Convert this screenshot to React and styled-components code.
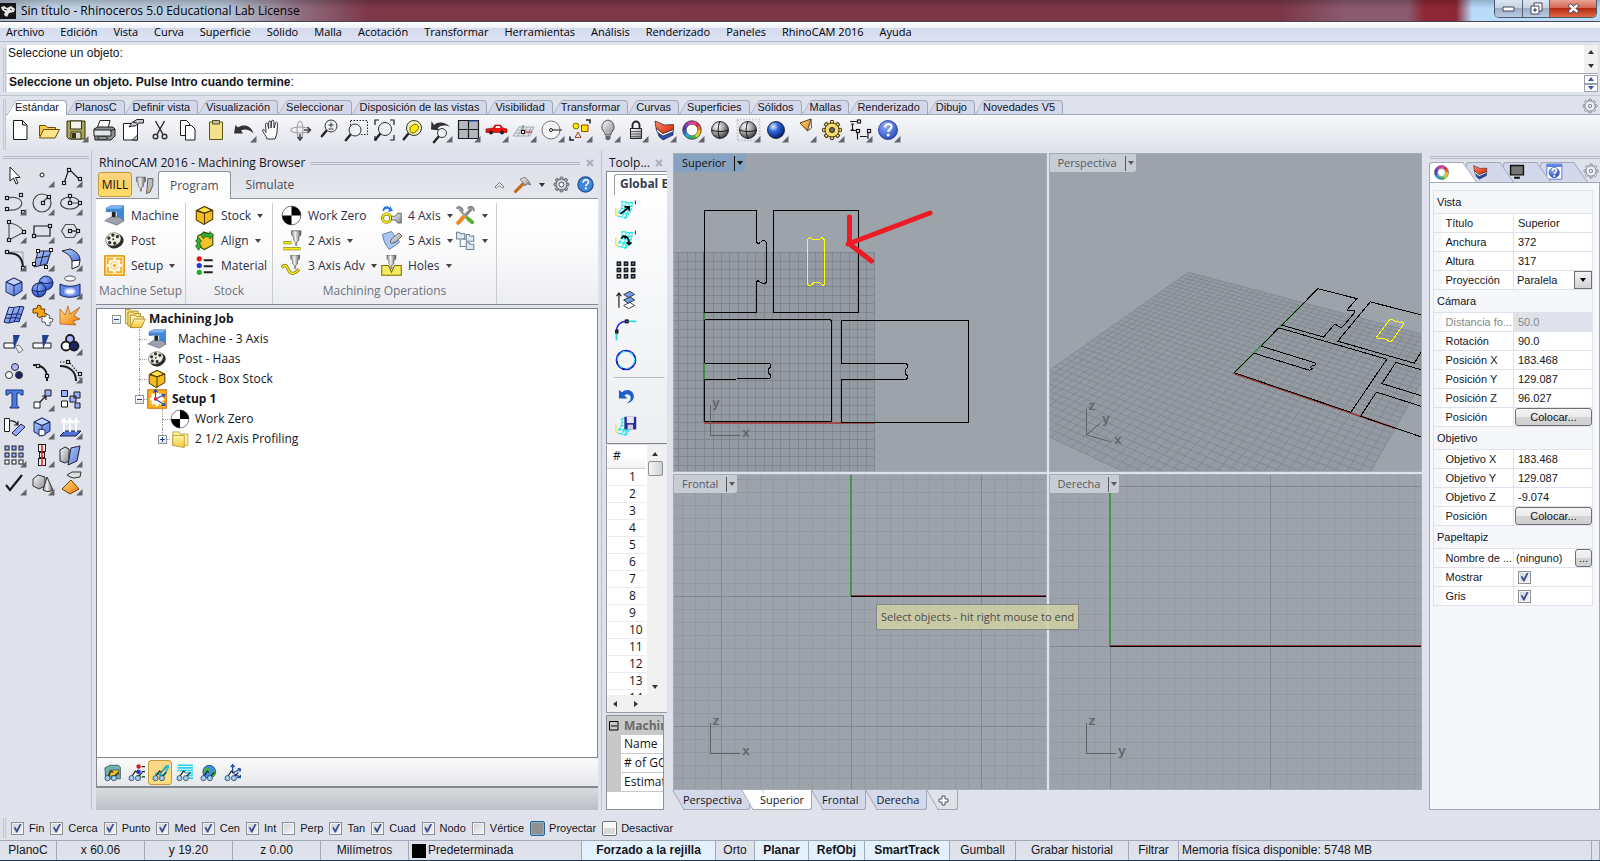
import React from "react";
import styled, { createGlobalStyle, css } from "styled-components";

const ui = '"Open Sans", "Noto Sans", sans-serif';
const sys = '"Liberation Sans", Arial, sans-serif';
const face = "#dfe2ea";
const edge = "#a0a9b8";
const tabFill = "#d3d9ea";

const Global = createGlobalStyle`
  *, *::before, *::after { box-sizing: border-box; }
  body { margin: 0; background: ${face}; color: #15151c; font: 12px/16px ${ui}; }
  button, input, select { font: inherit; color: inherit; margin: 0; }
  ul { list-style: none; margin: 0; padding: 0; }
`;

/* ---------- shared parts ---------- */

const Window = styled.div`
  min-height: 100vh;
  display: flex;
  flex-direction: column;
`;
const bare = css`
  border: 0;
  background: none;
  padding: 0;
`;
const IconButton = styled.button`
  ${bare}
  width: ${(p) => p.$size || 28}px;
  height: ${(p) => p.$size || 28}px;
  flex: none;
  display: flex;
  align-items: center;
  justify-content: center;
`;
const Art = styled.svg`
  display: block;
  flex: none;
`;
const SharedDefs = styled(Art)`
  position: absolute;
`;
const Grip = styled.div`
  flex: 1;
  height: 3px;
  border: solid #b4bac8;
  border-width: 1px 0;
`;
const SideGrip = styled.div`
  width: 3px;
  margin: 3px 0 0 3px;
  border: solid #c0c5d2;
  border-width: 0 1px;
`;

function Icon({ art, size = 28, fly, box = 28 }) {
  return (
    <Art width={size} height={size} viewBox={`0 0 ${box} ${box}`} aria-hidden="true">
      {art}
      {fly && <path d="M26.500 20v6.500H20z" fill="#62656a" />}
    </Art>
  );
}

/* ---------- icon drawings ---------- */

const Defs = () => (
  <SharedDefs width="0" height="0" aria-hidden="true">
    <defs>
      <linearGradient id="gb" x1="0" y1="0" x2="1" y2="1"><stop offset="0" stopColor="#b9ccff" /><stop offset="1" stopColor="#4f74d8" /></linearGradient>
      <linearGradient id="gg" x1="0" y1="0" x2="1" y2="1"><stop offset="0" stopColor="#fdfdfd" /><stop offset="1" stopColor="#85888d" /></linearGradient>
      <linearGradient id="gm" x1="0" y1="0" x2="1" y2="0"><stop offset="0" stopColor="#8b8b8b" /><stop offset=".4" stopColor="#f2f2f2" /><stop offset="1" stopColor="#5a5a5a" /></linearGradient>
      <linearGradient id="gy" x1="0" y1="0" x2="0" y2="1"><stop offset="0" stopColor="#fff6a8" /><stop offset="1" stopColor="#f2c53c" /></linearGradient>
      <linearGradient id="go" x1="0" y1="0" x2="1" y2="1"><stop offset="0" stopColor="#ffdf8e" /><stop offset="1" stopColor="#ee7a00" /></linearGradient>
      <linearGradient id="gr" x1="0" y1="0" x2="1" y2="1"><stop offset="0" stopColor="#ff8a66" /><stop offset="1" stopColor="#e02200" /></linearGradient>
      <radialGradient id="sg" cx=".35" cy=".3" r=".75"><stop offset="0" stopColor="#fff" /><stop offset=".5" stopColor="#a5a5a5" /><stop offset="1" stopColor="#333" /></radialGradient>
      <radialGradient id="sb" cx=".35" cy=".3" r=".75"><stop offset="0" stopColor="#e8f2ff" /><stop offset=".4" stopColor="#2d66d8" /><stop offset="1" stopColor="#031763" /></radialGradient>
      <radialGradient id="sh" cx=".4" cy=".3" r=".8"><stop offset="0" stopColor="#8fb2ff" /><stop offset="1" stopColor="#1d3fb4" /></radialGradient>
    </defs>
  </SharedDefs>
);

const K = "#1b1b1b";
const ln = { fill: "none", stroke: K, strokeWidth: 1.2 };
const Sq = ({ at, s = 3, f = "#fff" }) =>
  at.map(([x, y], i) => <rect key={i} x={x - s / 2} y={y - s / 2} width={s} height={s} fill={f} stroke={K} />);
const Wheel = ({ r = 8, c = 14, w = 4 }) => {
  const cols = ["#e5234b", "#f26522", "#fcc10f", "#c8dc28", "#3fb54a", "#1aa99b", "#28a8e0", "#2a62c8", "#4b38a8", "#8e3cb8", "#d13bb5", "#ee3a8a"];
  const len = 2 * Math.PI * r;
  return (
    <g>
      <circle cx={c} cy={c} r={r + w / 2} fill="#fff" />
      {cols.map((k, i) => (
        <circle key={k} cx={c} cy={c} r={r} fill="none" stroke={k} strokeWidth={w} strokeDasharray={`${len / 12 + 0.4} ${len}`} transform={`rotate(${i * 30 - 60} ${c} ${c})`} />
      ))}
      <circle cx={c} cy={c} r={r + w / 2} fill="none" stroke="#333" strokeWidth=".8" />
      <circle cx={c} cy={c} r={r - w / 2} fill="#fff" stroke="#333" strokeWidth=".6" />
    </g>
  );
};
const Lens = ({ x = 16, y = 11, r = 6, f = "#eef1f4" }) => (
  <g>
    <path d={`M${x - r * 0.7} ${y + r * 0.7}L${x - r * 0.7 - 5} ${y + r * 0.7 + 6}`} stroke="#222" strokeWidth="2.400" strokeLinecap="round" />
    <circle cx={x} cy={y} r={r} fill={f} stroke="#333" />
  </g>
);
const Layers = () => (
  <g stroke="#1c1c2c" strokeWidth=".7">
    <path d="M7 14l6 4.500 10-4V19l-10 5-4-3.500z" fill="#2b4fae" />
    <path d="M6 12l7 5.500 10.500-4v2L13 20l-6-4z" fill="#fff" />
    <path d="M5 5l9.500 4 9-.5V13L13 17.500 6 12z" fill="url(#gr)" />
  </g>
);
const Help = ({ c = 14, r = 9.5 }) => (
  <g>
    <circle cx={c} cy={c} r={r} fill="url(#sh)" stroke="#1a2f96" strokeWidth=".8" />
    <path d={`M${c - 3} ${c - 2.5}c0-4.500 6.500-4.500 6.500-.8 0 2.600-3.300 2.600-3.300 5.300`} fill="none" stroke="#fff" strokeWidth="2.200" />
    <circle cx={c + 0.2} cy={c + 5} r="1.500" fill="#fff" />
  </g>
);
const Cog = ({ c = 14, r = 7, f = "#f5dc6e", s = "#3d3410", hole = 2.6, hf = "#666", sw = 1 }) => (
  <g>
    {[0, 45, 90, 135, 180, 225, 270, 315].map((a) => (
      <rect key={a} x={c - r * 0.24} y={c - r * 1.35} width={r * 0.48} height={r * 0.6} rx=".6" fill={f} stroke={s} strokeWidth={sw} transform={`rotate(${a} ${c} ${c})`} />
    ))}
    <circle cx={c} cy={c} r={r} fill={f} stroke={s} strokeWidth={sw} />
    <circle cx={c} cy={c} r={hole} fill={hf} stroke={s} strokeWidth={sw} />
  </g>
);
const Ball = ({ g = "url(#sg)", lines = true }) => (
  <g>
    <circle cx="14" cy="14" r="8.500" fill={g} stroke="#111" strokeWidth=".8" />
    {lines && <path d="M5.500 14c5 2 12 2 17 0M14 5.500c-2.500 5-2.500 12 0 17" fill="none" stroke="#111" />}
  </g>
);
const Cube = ({ f = "url(#gb)" }) => (
  <g stroke="#1e2d66" strokeWidth="1">
    <path d="M6 9l8-4 8 4v9l-8 5-8-4z" fill={f} />
    <path d="M6 9l8-4 8 4-8 3.500z" fill="#c3d2ff" />
    <path d="M6 9l8 3.500L22 9M14 12.500V23" fill="none" />
  </g>
);

const std = [
  ["Nuevo", <path d="M7.500 4.500h9l4.500 4.500v14.500H7.500zM16.500 4.500V9H21" fill="#fff" stroke={K} />],
  ["Abrir", <g stroke="#6b4c00"><path d="M5.500 20V9.500h6l2 2h8V20z" fill="#f5c945" /><path d="M5.500 22l4-8.500h16L21 22z" fill="#ffe48a" /></g>],
  ["Guardar", <g stroke="#33310f"><path d="M5 5h18v18H7l-2-2z" fill="#a9a75c" /><path d="M8.500 5h11v8h-11z" fill="#f2f2ec" /><path d="M9 16h10v7H9z" fill="#d9d9ce" /><path d="M10.500 17.500h3V22h-3z" fill="#33310f" /></g>, 1],
  ["Imprimir", <g stroke="#222"><path d="M10 4.500h10l-2 8H7z" fill="#fff" /><path d="M4 13l4-2h15l2 2v7l-4 4H5z" fill="#8d9096" /><path d="M4 14h17v6H4z" fill="#e4e6e8" /><path d="M20 15l5-2M8 21h9v2H8z" fill="#fff" /></g>],
  ["Propiedades del documento", <g stroke="#222"><path d="M5.500 7.500h14V24h-14z" fill="#fff" /><path d="M19.500 19v5h-5z" fill="#ccc" /><path d="M11 11l3-4.500 5-3h6.500V7H21l-4 3h-3z" fill="#c9ccd2" /><path d="M15 6l4 1" /></g>],
  ["Cortar", <g {...ln} stroke="#333" strokeWidth="1.500"><path d="M9.500 5l7.500 13.500M18.500 5L11 18.500" /><circle cx="9.500" cy="20.500" r="2.300" /><circle cx="18.500" cy="20.500" r="2.300" /></g>],
  ["Copiar", <g fill="#fff" stroke={K}><path d="M6.500 4.500h6l3 3v12h-9z" /><path d="M11.500 9.500h6l3.500 3.500v11h-9.500z" /></g>],
  ["Pegar", <g stroke="#5b5310"><path d="M7.500 6h13v17.500h-13z" fill="#f3e08a" /><path d="M10.500 4.500h7v3.500h-7z" fill="#bbb" /></g>],
  ["Deshacer", <g><path d="M8 11.500c6-4 13-2 15.500 6-4-4-8.500-5-12.500-3l2 3-9 0 1.500-8.500z" fill="#333" /></g>, 1],
  ["Encuadre", <path d="M9 23c-1-4-4-6-4.500-9 1-1 2.500 0 3.500 2.500L7.500 8c.7-1.500 2-1 2.300.5l.9 4V6c.5-1.500 2-1.500 2.300 0v6l.7-7c.7-1.300 2-1 2.200.4L16 12l1.500-5c.8-1.200 2-.8 2 .5L19 17l-2 6z" fill="#fff" stroke="#333" />],
  ["Rotar vista", <g fill="none" stroke="#444"><ellipse cx="14" cy="14" rx="9.500" ry="3" stroke="#999" /><ellipse cx="14" cy="14" rx="3" ry="9" stroke="#999" /><path d="M18 14h6M14 18v6M11.500 21l2.500 3 2.500-3M21.500 11l3 3-3 3" strokeWidth="1.500" /></g>],
  ["Zoom dinámico", <g><Lens x={17} y={10} /><path d="M14.500 9h5M17 6.500v5M14.500 13h5" stroke="#333" /></g>],
  ["Zoom ventana", <g><rect x="8.500" y="4.500" width="17" height="14" {...ln} strokeDasharray="1.500 1.500" strokeWidth="1" /><Lens x={13} y={14} /></g>],
  ["Zoom extensión", <g><Lens x={15} y={13} r={6.5} /><path d="M5 9V4h4M20 4h4v5M24 19v5h-4M5 20v4h2" {...ln} /></g>],
  ["Zoom seleccionado", <g><Lens x={16} y={12} r={7.5} f="#f6f1b4" /><path d="M12 13a3 3 0 0 0 6 2 3.500 3.500 0 1 0-4-5 3 3 0 0 0-2 3z" fill="#ffe600" stroke="#7a6a00" /></g>],
  ["Deshacer vista", <g><path d="M8 9c4-4 12-3 16 2-4-2-9-2-12 1l1 2.500-8-1 .5-8.500z" fill="#333" /><Lens x={16} y={17} r={4.5} /></g>, 1],
  ["Vistas", <g><path d="M4.500 4.500h20v18h-20z" fill="#b4b8be" stroke={K} strokeWidth="1.200" /><path d="M14.500 4v19M4 13.500h21" stroke={K} strokeWidth="1.200" /><path d="M15 5h9" stroke="#1d46d2" strokeWidth="1" /></g>, 1],
  ["Vista derecha", <g><path d="M4 13l7-1 2-3h5.500l2.500 3 4 1v3.500H4z" fill="#e81510" stroke="#8b0000" strokeWidth=".6" /><path d="M14 10h3.500l1 2h-5z" fill="#fff" /><circle cx="9" cy="16.500" r="2" fill="#222" /><circle cx="20" cy="16.500" r="2" fill="#222" /></g>, 1],
  ["Planos de construcción", <g fill="none" stroke="#a6a9ae"><path d="M3 20l6-9h15l-4 9zM7 14h16M5 17h16M12 11l-4 9M17 11l-4 9M21 11l-3 9" /><path d="M13 16V9" stroke="#2b8f2b" /><path d="M13 16h9" stroke="#c22" /><rect x="11.500" y="14.500" width="3" height="3" fill="#fff" stroke={K} /></g>, 1],
  ["Referencia", <g><circle cx="13" cy="14" r="9" fill="#f3f4f6" stroke="#777" /><path d="M13 14h11" stroke={K} /><circle cx="13" cy="14" r="1.500" fill="#fff" stroke={K} /></g>, 1],
  ["Seleccionar objetos", <g><circle cx="10" cy="10" r="3" fill="#ffe600" stroke="#8a6d00" /><path d="M15.500 9h6.500v6.500h-6.500z" fill="#ffe600" stroke="#a33b00" /><path d="M12 16l3 5.500H9z" fill="none" stroke="#a0441c" /><path d="M20 4h4v3.500M4 20.500V24h4" {...ln} strokeWidth="1.500" /></g>, 1],
  ["Visibilidad", <g><path d="M14 4a7 7 0 0 1 4 12c-1 1-1 2-1 3h-6c0-1 0-2-1-3A7 7 0 0 1 14 4z" fill="url(#gg)" stroke="#555" /><path d="M11.500 20h5v3l-2.500 1.500-2.500-1.500z" fill="#666" /></g>, 1],
  ["Bloquear", <g><path d="M10.500 13V9a3.500 3.500 0 0 1 7 0v4" fill="none" stroke="#222" strokeWidth="1.800" /><path d="M8.500 12.500h11v10h-11z" fill="url(#gg)" stroke="#222" /><path d="M9 15.500h10M9 18h10M9 20.500h10" stroke="#666" /></g>, 1],
  ["Capas", <Layers />, 1],
  ["Propiedades", <Wheel r={7.5} w={3.5} />, 1],
  ["Sombrear", <Ball />],
  ["Sombreado renderizado", <g><rect x="3.500" y="3.500" width="22" height="21" fill="none" stroke="#aeb1b7" strokeWidth="2" strokeDasharray="1 2" /><Ball /></g>, 1],
  ["Renderizar", <Ball g="url(#sb)" lines={false} />, 1],
  ["Focos", <g><path d="M10 7l11-4-3.500 12z" fill="url(#go)" stroke="#5a3500" /><path d="M17.500 15L21 3l.5 9z" fill="#eee" stroke="#555" /></g>, 1],
  ["Opciones", <Cog />, 1],
  ["Acotar", <g {...ln}><path d="M4 5.500h9M6.500 8v6M4.500 14.500h7v9M22 15v8M14 20.500h7M5 8h3M5 14h3" /><Sq at={[[13, 5.500], [12, 15], [23, 15]]} /></g>, 1],
  ["Ayuda", <Help />, 1],
];

const tools = [
  ["Puntero", <path d="M10 6v14l3.500-3 2.500 6 2-1-2.500-5.500H20z" fill="#fff" stroke={K} />],
  ["Punto", <circle cx="14" cy="14" r="2" fill="#fff" stroke={K} />, 1],
  ["Polilínea", <g {...ln}><path d="M8 22l5-14 11 11" /><Sq at={[[8, 22], [13, 9], [24, 18]]} /></g>, 1],
  ["Curva", <g {...ln} stroke="#555"><path d="M7 9c20-4 19 14 1 12" /><Sq at={[[7, 9], [7, 20], [21, 6], [23, 23]]} /></g>, 1],
  ["Círculo", <g {...ln} stroke="#444"><circle cx="14" cy="14" r="9" /><path d="M14 14l6-6" /><Sq at={[[15, 14], [21, 8]]} /></g>, 1],
  ["Elipse", <g {...ln} stroke="#444"><ellipse cx="14" cy="14" rx="9.500" ry="6" /><path d="M15 14h8M14 8v6" /><Sq at={[[14, 14], [14, 7], [24, 14]]} /></g>, 1],
  ["Arco", <g {...ln} stroke="#555"><path d="M9 23V6c8 1 12 4 15 9L9 23" /><Sq at={[[9, 5], [24, 15], [9, 23]]} /></g>, 1],
  ["Rectángulo", <g {...ln}><path d="M6 9h16v10H6z" /><Sq at={[[22, 9], [6, 19]]} /></g>, 1],
  ["Polígono", <g {...ln}><path d="M9.500 7.500h8.500l4 6.500-4 6.500H9.500L5.500 14z" stroke="#555" /><path d="M14 14h8" /><Sq at={[[14, 14], [22, 14]]} /></g>, 1],
  ["Empalmar curvas", <g {...ln}><path d="M23 7v14M7 7h16" stroke="#999" strokeWidth="1" /><path d="M7 8c10 0 15 3 16 14" strokeWidth="2" /><Sq at={[[7, 7], [23, 23]]} /></g>, 1],
  ["Superficie por puntos", <g><path d="M10 6h13l-4 13-13 3z" fill="url(#gb)" stroke="#223" /><path d="M8 13l13-2M16 6l-4 15" stroke="#223" fill="none" /><Sq at={[[10, 6], [23, 5], [6, 19], [18, 22]]} /></g>, 1],
  ["Extrusión curvada", <g stroke="#223"><path d="M6 6l8-2c6 2 10 6 10 11l-8 1C15 11 11 8 6 6z" fill="url(#gb)" /><path d="M16 16l8-1-1 6-7 3z" fill="#fff" /></g>, 1],
  ["Caja", <Cube />, 1],
  ["Esferas", <g stroke="#16225c"><circle cx="18" cy="10" r="7" fill="url(#sh)" /><circle cx="11" cy="17" r="7" fill="url(#sh)" /><path d="M4 17c4 2 10 2 14 0M11 10c-3 4-2 10 0 14M12 9c4 2 9 2 13 0" fill="none" /></g>, 1],
  ["Superficie", <g stroke="#16225c"><ellipse cx="14" cy="5.500" rx="5.500" ry="2.500" fill="#fff" stroke="#555" /><path d="M4 11c6 3 14 3 20 0v11c-6 3-14 3-20 0z" fill="#5f84e4" /><ellipse cx="14" cy="18.500" rx="5" ry="3" fill="#fff" stroke="#a8bcff" strokeWidth="2" /></g>, 1],
  ["Malla", <g stroke="#16225c"><path d="M9 6c6 2 9-2 15 0l-5 15c-5-2-9 3-15 0z" fill="url(#gb)" /><path d="M7 13c6 2 9-2 15 1M14 7L9 22M20 6l-6 15M6 17c5 1 9-2 14 1" fill="none" /></g>, 1],
  ["Complementos", <g><path d="M5 8l4-1 1-3 3 1v3h4l-1 4 3 1-1 3-4-1-2 2-3-2 1-3H5z" fill="#f9a61a" stroke="#6b3c00" /><path d="M14 15l3 1 2-3 3 2-1 2 4 1-1 3-2 0v4l-4-1-1-3-3 0z" fill="#fff" stroke="#555" /></g>],
  ["Explotar", <path d="M4 23V8l5 6 3-9 2 8 10-7-6 9 6 3-7 2 3 4z" fill="url(#go)" stroke="#a33c00" strokeWidth=".6" />],
  ["Recortar", <g><path d="M4 14h10l1 5H4z" fill="#fff" stroke={K} /><path d="M15 17l4-1 4 5-4 3z" fill="#eee" stroke="#777" /><path d="M13 6h7l-6 14z" fill="#1f3f94" /></g>],
  ["Partir", <g><path d="M5 14h18v5H5z" fill="#fff" stroke={K} /><path d="M14 6h7l-6 14z" fill="#1f3f94" /></g>],
  ["Unir", <g stroke={K} strokeWidth="1.800"><circle cx="14" cy="10" r="4" fill="#aab6ff" /><circle cx="10" cy="17" r="4.500" fill="#fff" /><circle cx="18" cy="17" r="4.500" fill="#1b2464" /></g>, 1],
  ["Agrupar", <g stroke="#333"><circle cx="15" cy="10" r="3.500" fill="#aab6ff" /><circle cx="9" cy="18" r="3.500" fill="#fff" /><circle cx="19" cy="18" r="3.500" fill="#1b2464" /></g>],
  ["Puntos", <g {...ln}><path d="M5 8c10 0 15 5 14 16" strokeWidth="2" /><Sq at={[[10, 9], [19, 19]]} /></g>],
  ["Editar curva", <g {...ln}><path d="M4 9c10 0 16 6 16 15" strokeWidth="2" /><path d="M4 5h9M14 6l10 12v6" strokeDasharray="1.500 1.500" /><Sq at={[[12, 5], [24, 17]]} /></g>, 1],
  ["Texto", <path d="M6 5h17v5h-2c-1-2-2-2-4-2v12c0 1 1 2 2 2v1h-9v-1c1 0 2-1 2-2V8c-2 0-3 0-4 2H6z" fill="#4d7be0" stroke="#1a2f7c" />],
  ["Mover", <g><path d="M10 19l8-8M14 11h4v4" {...ln} /><path d="M17 5h6v6h-6z" fill="#9ab0ff" stroke={K} /><path d="M6 17h6v6H6z" fill="#fff" stroke={K} /></g>, 1],
  ["Bloques", <g stroke={K} fill="#9ab0ff"><path d="M5.500 5.500h6v6h-6zM18 7h6v6h-6zM14 11h6v6h-6zM19 18h5v5h-5z" /><path d="M5.500 16h6v6h-6z" fill="#fff" /></g>],
  ["Orientar", <g><path d="M4.500 5.500h5v13h-5z" fill="#fff" stroke={K} /><path d="M12 20l9-9 4 3-9 9z" fill="#8ea8ff" stroke="#223" /><path d="M10 8c4-1 6 1 8 4M18 8v4h-4" {...ln} /></g>],
  ["Sólidos", <g><Cube /><path d="M11 16l6 1v5l-6 1z" fill="#fff" stroke="#1e2d66" /></g>, 1],
  ["Extruir", <g><path d="M4 23l5-5h16l-5 5z" fill="#4f74d8" stroke="#16225c" /><path d="M8 19V7M14 19V7M20 19V7M5 10l3-4 3 4M11 10l3-4 3 4M17 10l3-4 3 4" fill="none" stroke="#fff" strokeWidth="1.800" /></g>, 1],
  ["Matriz", <g><Sq s={4} f="#9ab0ff" at={[[7, 7], [14, 7], [21, 7], [7, 14], [14, 14], [21, 14]]} /><Sq s={4} at={[[7, 21], [14, 21], [21, 21]]} /></g>, 1],
  ["Simetría", <g><Sq s={7} f="#eee" at={[[14, 7], [14, 21]]} /><Sq s={5} f="#eee" at={[[14, 14]]} /><path d="M14 4v21" stroke="#d22" strokeWidth="1.600" /></g>, 1],
  ["Deformar", <g stroke="#223"><path d="M4 9l5-3 4 2v12l-4 2-5-2z" fill="url(#gg)" /><path d="M15 7l9-2-3 15-9 4z" fill="url(#gb)" /></g>, 1],
  ["Comprobar", <path d="M6 16l4 5L22 6" fill="none" stroke={K} strokeWidth="2.200" />, 1],
  ["Primitivas", <g stroke="#333"><path d="M5 10l5-4 7 2v9l-6 3-6-3z" fill="url(#gg)" /><path d="M19 8l6 13c-3 2-7 2-10 0z" fill="url(#gm)" /></g>, 1],
  ["Renderizar objeto", <g><path d="M6 20l9-9 8 9-9 5z" fill="url(#go)" stroke="#6b3c00" /><path d="M11 6l5-3h9l-1 5-6 1-4-1z" fill="#ddd" stroke="#333" /></g>, 1],
];

const Mill = () => (
  <g stroke="#444" strokeWidth=".6">
    <path d="M0 0h9v4l-2 2v3L5 11v3H4v-3L2 9V6L0 4z" fill="url(#gm)" />
  </g>
);
const camIcons = {
  machine: <g><path d="M3 4l6-3h17v20H13V9H3z" fill="#3f86dd" stroke="#17406f" strokeWidth=".6" /><path d="M3 4l6-3h17l-4 4H3z" fill="#7fb4f0" /><path d="M8 9h9v9H8z" fill="#e8edf3" /><path d="M10.500 9h5v7l-2.500 2.500-2.500-2.500z" fill="#222" /><path d="M1 21l8-5h12l6 5-10 6z" fill="#9aa3ad" stroke="#444" strokeWidth=".6" /></g>,
  post: <g transform="rotate(-20 14 14)"><ellipse cx="14.500" cy="15" rx="11.500" ry="9.500" fill="#2a2a2a" /><ellipse cx="13" cy="12" rx="10.500" ry="8.500" fill="#f0efe2" stroke="#333" strokeWidth=".6" /><g fill="#333"><circle cx="8" cy="8.500" r="2.200" /><circle cx="14.500" cy="6.500" r="2.200" /><circle cx="19.500" cy="10.500" r="2.200" /><circle cx="7" cy="14.500" r="2.200" /><circle cx="13" cy="17.500" r="2.200" /><circle cx="13" cy="12" r="1.300" /></g></g>,
  setup: <g><path d="M1 1h26v26H1z" fill="#f7b320" stroke="#e08a00" strokeWidth="1.500" /><path d="M3 3h22v22H3z" fill="none" stroke="#fff" strokeWidth="1" /><Cog r={7} f="#fff" s="#fff" hf="#f7b320" hole={3} /><circle cx="14" cy="14" r="5" fill="none" stroke="#f7b320" /></g>,
  stock: <g stroke="#4f3a00" strokeWidth="1.400"><path d="M3 8l11-6 11 5v12l-12 7-10-6z" fill="#f5bc1e" /><path d="M4 7l10-5 10 5-10 4z" fill="#ffe14a" /><path d="M3 8l11 3v15M14 11l11-4" fill="none" /></g>,
  align: <g><path d="M5 8l9-5 11 3v14l-11 6-9-5z" fill="#f3c32c" stroke="#3c4a00" strokeWidth="1.500" /><path d="M9 7l4-5v3h8V2l5 5-5 5V9h-8v3zM2 15l4-5 4 5H8v6h2l-4 6-4-6h2v-6z" fill="#35b43a" stroke="#0d5c12" /></g>,
  material: <g><circle cx="7" cy="5" r="3.500" fill="#e01b1b" /><circle cx="7" cy="14" r="3.500" fill="#2636d9" /><circle cx="7" cy="23" r="3.500" fill="#1fae2b" /><path d="M13 7h12M13 15h12M13 23h12" stroke="#222" strokeWidth="2.400" /></g>,
  zero: <g><circle cx="14" cy="14" r="12.500" fill="#fff" stroke="#222" strokeWidth=".8" /><path d="M14 14V1.500A12.500 12.500 0 0 0 1.500 14zM14 14v12.500A12.500 12.500 0 0 0 26.500 14z" fill="#000" transform="rotate(90 14 14)" /></g>,
  axis2: <g><path d="M3 17h11M3 25h23" stroke="#6b6200" strokeWidth="4" /><path d="M3 17h11M3 25h23" stroke="#f2ea12" strokeWidth="2.400" /><g transform="translate(14 1) scale(1.400)"><Mill /></g></g>,
  axis3: <g><path d="M1 17c4-5 6-4 8 1 3 8 8 9 15 1" fill="none" stroke="#6b6200" strokeWidth="4" /><path d="M1 17c4-5 6-4 8 1 3 8 8 9 15 1" fill="none" stroke="#f2ea12" strokeWidth="2.400" /><g transform="translate(13 0) scale(1.300)"><Mill /></g></g>,
  axis4: <g><path d="M2 8c0-7 7-8 10-4V1l4 7-7 1 2-3C8 4 5 5 4 8z" fill="#2377d8" /><circle cx="7.500" cy="17.500" r="5.500" fill="none" stroke="#6b6200" strokeWidth="4" /><circle cx="7.500" cy="17.500" r="5.500" fill="none" stroke="#f2ea12" strokeWidth="2.400" /><path d="M14 15h5l3-4h5v13h-5l-3-4h-5z" fill="url(#gg)" stroke="#444" /></g>,
  axis5: <g><path d="M2 6l12-4c4 6 7 10 11 14l-14 10C5 19 3 12 2 6z" fill="#a9c6f3" stroke="#3c5e9c" /><path d="M12 16l3-5 9-7 4 4-8 8-6 2z" fill="url(#gg)" stroke="#444" /></g>,
  holes: <g><path d="M1 14h9l4 9 4-9h9v13H1z" fill="#f6ea62" stroke="#7a6e00" strokeWidth="1.400" /><g transform="translate(8 0) scale(1.300)"><Mill /></g></g>,
  wrench: <g strokeLinecap="round"><path d="M6 23L21 6" stroke="#888" strokeWidth="4" /><path d="M6 6l15 16" stroke="#999" strokeWidth="3" /><path d="M4 24l7-8" stroke="#f08a1c" strokeWidth="5" /><path d="M17 18l6 5" stroke="#56b030" strokeWidth="5" /><path d="M3 4c2-2 6-1 7 3M18 4c3-3 7-1 7 3" fill="none" stroke="#888" strokeWidth="3" /></g>,
  folders: <g fill="#dfe9f2" stroke="#6f8596" strokeWidth="1.400"><path d="M2 3h4l1 2h6v7H2zM15 6h4l1 2h5v7H15zM15 17h4l1 2h5v7H15z" /><path d="M7 12v10h8M10 12h5" fill="none" /></g>,
  job: <g stroke="#a07a10"><path d="M2 2h6l2 2h8v16H2z" fill="#ffe88c" /><path d="M5 5h6l2 2h8v16H5z" fill="#fbe28a" /><path d="M8 24V9h6l2 2h9l-3 13z" fill="#fff0a8" /><path d="M8 25l5-11h14l-5 11z" fill="url(#gy)" /></g>,
  setup1: <g><path d="M1 1h26v26H1z" fill="#f7b320" stroke="#e06a00" strokeWidth="1.500" /><Cog r={7} f="#fff" s="#fff" hf="#fff" hole={3} /><path d="M12 14V2M12 14l12-6M12 14l12 8M9 5l3-4 3 4M20 7l5 1-2 4M20 23l5 0v-4" fill="none" stroke="#1d4fae" strokeWidth="1.600" /><circle cx="12" cy="14" r="2.500" fill="#e01b1b" /></g>,
  folder: <g stroke="#b38a14"><path d="M4 4h8l2 3h11v16H4z" fill="#fff0a8" /><path d="M4 9h16v17L4 23z" fill="url(#gy)" /></g>,
};
const Scope = () => (
  <g stroke="#15233c" strokeWidth="1">
    <path d="M7 20l6-9 3 2M16 21l8-8" fill="none" strokeWidth="1.800" stroke="#222" />
    <circle cx="7" cy="22" r="4" fill="#9fcdf5" />
    <circle cx="17" cy="22" r="4" fill="#9fcdf5" />
  </g>
);
const viewIcons = [
  ["Ver stock", <g><path d="M3 6l8-4h13l3 3v18H4z" fill="#6fb3ae" stroke="#15332f" /><path d="M10 10l14-1v8l-14 2z" fill="#f3c32c" stroke="#333" /><Scope /></g>],
  ["Ver material", <g><circle cx="18" cy="4" r="3.500" fill="#e01b1b" /><circle cx="18" cy="12" r="3.500" fill="#2636d9" /><circle cx="18" cy="20" r="3.500" fill="#1fae2b" /><path d="M23 4h5M23 12h5M23 20h5" stroke="#222" strokeWidth="2" /><Scope /></g>],
  ["Ver trayectoria", <g><path d="M6 15h8L24 3h4l-8 14h-8" fill="none" stroke="#16c8dc" strokeWidth="3" /><path d="M12 17L25 4" stroke="#888" strokeWidth="2" /><Scope /></g>],
  ["Ver niveles", <g><path d="M4 2h24M4 6h24M4 10h24M16 14h12M20 18h8M22 22h6" stroke="#22d6e6" strokeWidth="2.400" /><Scope /></g>],
  ["Ver mundo", <g><circle cx="16" cy="12" r="10" fill="#3c8fe0" stroke="#123" /><path d="M10 6l6 1 2 5-6 3-5-4zM20 14l5-3v7l-5 2z" fill="#48b04a" /><Scope /></g>],
  ["Ver ejes", <g><path d="M15 14V2M15 14l12-6M15 14l11 6M12 5l3-4 3 4M23 7l5 1-2 4M22 21l5 0v-4" fill="none" stroke="#1d4fae" strokeWidth="2" /><Scope /></g>],
];
const Mesh = () => (
  <g fill="none" stroke="#17e3e6" strokeWidth="1.600">
    <path strokeDasharray="3 .8" d="M8 4c5-3 7 3 14 0M8 9c5-3 7 3 13 0M7 13c5-3 7 3 13 0M5 18c5-3 7 3 12 0M4 22c5 0 7 4 11 1M9 3c0 8-1 12-5 15M14 4c0 8-1 14-6 19M18 5c0 8-2 13-6 20M22 4c0 8-3 14-9 21" />
    <path d="M1 11v9l3 2" stroke="#f2e21c" />
  </g>
);
const pathTools = [
  ["Editar punto", <g><Mesh /><path d="M7 19l10-8M12 10h6v5" fill="none" stroke="#000" strokeWidth="2" /><path d="M26 2v5" stroke="#e00" strokeWidth="1.500" /></g>],
  ["Mover punto", <g><Mesh /><path d="M8 12l3-3 3 3M11 9c5 0 7 5 7 10M15 17l3 3 3-3" fill="none" stroke="#000" strokeWidth="2" /><path d="M26 2v5" stroke="#e00" strokeWidth="1.500" /></g>],
  ["Matriz de trayectoria", <g strokeWidth="2"><Sq s={4} f="#6f9fe6" at={[[5, 6], [14, 6], [23, 6], [5, 14], [14, 14], [23, 14], [14, 22], [23, 22]]} /><Sq s={4} at={[[5, 22]]} /></g>],
  ["Apilar", <g stroke={K}><path d="M5 24V6M2 9l3-4 3 4" fill="none" strokeWidth="1.500" /><path d="M11 21l8-4 6 4-8 4z" fill="#fff" /><path d="M11 14l8-4 6 4-8 4z" fill="#6f9fe6" /><path d="M11 7l8-4 6 4-8 4z" fill="#6f9fe6" /></g>],
  ["Entrada en arco", <g fill="none" strokeWidth="2"><path d="M2 16C2 8 7 3 15 3" stroke="#2222dd" /><path d="M15 3h12M2 16v11" stroke="#2fd9e6" strokeWidth="2.500" /><Sq at={[[15, 3], [2, 16]]} /></g>],
  ["Círculo", <g fill="none"><circle cx="14" cy="14" r="12" stroke="#1414c8" strokeWidth="2.400" /><circle cx="14" cy="14" r="11" stroke="#2fd9e6" strokeWidth="1.600" strokeDasharray="7 4" /></g>],
];

/* ---------- title bar and menus ---------- */

const TitleBar = styled.header`
  height: 22px;
  display: flex;
  align-items: center;
  border-bottom: 1px solid #454450;
  background: linear-gradient(#0003, #0000 40%),
    linear-gradient(90deg, #a9b6c6 0, #c2d4e6 3%, #b7c6d8 14%, #8e6b7c 19%, #7d384a 23%, #7b3748 80%, #8a5a6e 84%, #8a5a6e 88%, #8f2837 89%, #8d2634 91%, #b9dcfb 92%);
  h1 { flex: 1; margin: 0 0 0 5px; font: 12px/20px ${ui}; color: #000; }
`;
const WinButtons = styled.div`
  display: flex;
  align-self: flex-start;
  height: 18px;
  margin-right: 3px;
  border: 1px solid #4d5a6b;
  border-top: 0;
  border-radius: 0 0 5px 5px;
  overflow: hidden;
`;
const WinButton = styled.button`
  ${bare}
  width: ${(p) => (p.$close ? 47 : 27)}px;
  display: grid;
  place-items: center;
  border-left: ${(p) => (p.$first ? 0 : "1px solid #5a6778")};
  background: ${(p) => (p.$close ? "linear-gradient(#e8a193, #d4674f 48%, #b52a10 50%, #e06a48)" : "linear-gradient(#dbe6f2, #c3d2e2 48%, #9aafc6 50%, #b9cde2)")};
`;
const MenuBar = styled.nav`
  height: 20px;
  padding-left: 6px;
  display: flex;
  align-items: center;
  gap: 16px;
  border-bottom: 1px solid #b3b9cb;
  background: linear-gradient(#fff, #eef0f8 33%, #d4dbee 34%, #dde3f4);
`;
const MenuItem = styled.button`
  ${bare}
  white-space: nowrap;
  font: 11px/16px ${ui};
  color: #000;
`;

/* ---------- command area ---------- */

const Row = styled.div`
  display: flex;
`;
const Command = styled.section`
  display: flex;
  padding: 3px 2px 3px 0;
  border-bottom: 1px solid #c3c8cf;
  font: 12px/16px ${sys};
`;
const CommandBody = styled.div`
  flex: 1;
  margin-left: 1px;
  background: #fff;
`;
const History = styled.div`
  display: flex;
  justify-content: space-between;
  height: 29px;
  border-bottom: 1px solid #a0a9b2;
  p { margin: 0; padding-left: 1px; }
`;
const Prompt = styled.div`
  display: flex;
  height: 18px;
  padding-left: 2px;
  label { white-space: nowrap; }
  input { ${bare} flex: 1; height: 16px; outline: 0; }
`;
const Spin = styled.div`
  width: 14px;
  display: flex;
  flex-direction: column;
  justify-content: space-around;
  align-items: center;
  background: #f0f0f0;
`;
const Steps = styled.div`
  width: 14px;
  display: grid;
  grid-template-rows: 1fr 1fr;
  padding-top: 1px;
  button { ${bare} border: 1px solid #9aa0ac; display: grid; place-items: center; }
`;

/* ---------- tabs ---------- */

const Tabs = styled.div`
  display: flex;
  align-items: flex-end;
  height: 19px;
  padding: 0 2px 0 1px;
  border-bottom: 1px solid ${edge};
`;
const Tab = styled.button`
  ${bare}
  position: relative;
  z-index: 0;
  height: 14px;
  padding: 0 8px;
  white-space: nowrap;
  font: 11px/15px ${sys};
  &::before, &::after {
    content: "";
    position: absolute;
    z-index: -1;
    top: 0;
    bottom: ${(p) => (p.$on ? -1 : 0)}px;
    background: ${(p) => (p.$on ? "#fff" : tabFill)};
    border: 1px solid ${edge};
    border-bottom: 0;
  }
  &::before { left: 4px; width: 14px; border-right: 0; border-radius: 3px 0 0 0; transform: skewX(-30deg); }
  &::after { left: 14px; right: 0; border-left: 0; border-radius: 0 4px 0 0; }
`;
const Spacer = styled.div`
  flex: 1;
`;
const Toolbar = styled.div`
  display: flex;
  height: 35px;
  padding-top: 1px;
  background: linear-gradient(#f7f8fa, ${face});
`;

/* ---------- main area ---------- */

const Main = styled.main`
  flex: 1;
  display: flex;
  min-height: 0;
  padding-bottom: 7px;
`;
const ToolColumn = styled.aside`
  width: 92px;
  flex: none;
  display: flex;
  flex-direction: column;
  padding: 6px 2px 0 0;
  border-right: 1px solid #bcc2cf;
`;
const ToolGrid = styled.div`
  display: grid;
  grid-template-columns: repeat(3, 28px);
  grid-auto-rows: 28px;
  margin-top: 2px;
`;
const GripTop = styled.div`
  display: flex;
  margin-left: ${(p) => p.$in}px;
`;

const Cam = styled.section`
  width: 510px;
  flex: none;
  display: flex;
  flex-direction: column;
  padding: 0 3px 0 4px;
  border-right: 1px solid #bcc2cf;
`;
const PanelTitle = styled.div`
  display: flex;
  align-items: center;
  gap: 5px;
  height: 21px;
  padding: 5px 3px 0;
  h2 { margin: 0; font: 12px/16px ${ui}; white-space: nowrap; }
  button { ${bare} width: 10px; height: 10px; display: grid; place-items: center; }
`;
const RibbonTabs = styled.div`
  display: flex;
  height: 28px;
  padding-right: 1px;
  align-items: center;
  background: linear-gradient(${face}, #e4e7ec);
  border-bottom: 1px solid #8f9399;
`;
const MillButton = styled.button`
  width: 34px;
  height: 25px;
  margin: 0 3px 0 2px;
  padding: 0;
  border: 1px solid #c49a3a;
  border-radius: 3px;
  background: linear-gradient(#fbd589, #ffcf5d 50%, #ffdf6e);
  font: 12px/20px ${ui};
`;
const RibbonTab = styled.button`
  ${bare}
  height: 28px;
  padding: ${(p) => (p.$on ? "0 11px" : "0 15px")};
  font: 12px/28px ${ui};
  color: #4a4d5c;
  ${(p) => p.$on && css`
    align-self: flex-start;
    background: #fdfdfe;
    border: 1px solid #8f9399;
    border-bottom: 0;
    border-radius: 3px 3px 0 0;
    margin-left: 3px;
  `}
`;
const Ribbon = styled.div`
  display: flex;
  height: 106px;
  padding-top: 4px;
  background: linear-gradient(#fff, #fbfbfc 50%, #ecedf0);
  border-bottom: 1px solid #85888e;
`;
const Group = styled.section`
  width: ${(p) => p.$w}px;
  padding-left: 8px;
  border-right: 1px solid #c9ccd1;
  h3 {
    margin: 0 0 0 -8px;
    font: 12px/26px ${ui};
    text-align: center;
    color: #6d717e;
  }
`;
const Commands = styled.div`
  display: grid;
  grid-template-columns: ${(p) => p.$cols || "1fr"};
  grid-template-rows: repeat(3, 25px);
  grid-auto-flow: column;
`;
const Cmd = styled.button`
  ${bare}
  display: flex;
  align-items: center;
  gap: 6px;
  white-space: nowrap;
  font: 12px/16px ${ui};
  color: #2c2f45;
`;
const TreeBox = styled.div`
  flex: 1;
  margin-top: 3px;
  border: 1px solid #7f838a;
  background: #fff;
`;
const Node = styled.div`
  display: flex;
  align-items: center;
  height: 20px;
  padding-left: 8px;
  gap: ${(p) => p.$gap || 5}px;
  font: 12px/16px ${ui};
  ${(p) => p.$bold && "font-weight: 700;"}
`;
const Root = styled.ul`
  > li > div { padding-left: 15px; gap: 3px; }
`;
const Branch = styled.ul`
  margin-left: ${(p) => p.$in}px;
  li { position: relative; }
  li::before { content: ""; position: absolute; left: 0; top: 0; bottom: 0; border-left: 1px dotted #999; }
  li:last-child::before { bottom: auto; height: 10px; }
  li::after { content: ""; position: absolute; left: 0; top: 10px; width: 8px; border-top: 1px dotted #999; }
`;
const Toggle = styled.button`
  ${bare}
  width: 9px;
  height: 9px;
  border: 1px solid #8d949c;
  background: linear-gradient(#fff, #e4e4e4);
  display: grid;
  place-items: center;
  ${(p) => p.$hang && css`
    position: absolute;
    left: -4px;
    top: 6px;
    z-index: 1;
  `}
`;
const ViewBar = styled.div`
  display: flex;
  height: 30px;
  padding: 2px 3px;
  background: linear-gradient(#fbfbfc, #e6e7ea);
  border: solid #85888e;
  border-width: 0 0 2px 1px;
`;
const ViewButton = styled(IconButton)`
  width: 24px;
  height: 25px;
  border-radius: 3px;
  ${(p) => p.$on && "background: linear-gradient(#fbd589, #ffe07a); border: 1px solid #c49a3a;"}
`;
const Foot = styled.div`
  height: 22px;
  background: linear-gradient(#d8dcdf, #bbc0c5);
`;

/* ---------- toolpath panel ---------- */

const Paths = styled.section`
  width: 71px;
  flex: none;
  display: flex;
  flex-direction: column;
  padding: 0 6px 0 4px;
`;
const PathTools = styled.div`
  display: flex;
  flex-direction: column;
  align-items: flex-start;
  height: 273px;
  border: solid #85888e;
  border-width: 1px 0 1px 1px;
  background: linear-gradient(#fff, #eceef1);
  padding-left: 7px;
  overflow: hidden;
  h3 {
    margin: 2px 0 0;
    padding-left: 5px;
    height: 21px;
    border: solid #9a9da3;
    border-width: 1px 0 0 1px;
    border-radius: 3px 0 0 0;
    font: 700 12px/18px ${ui};
    color: #333c50;
    white-space: nowrap;
  }
  hr { width: 50px; margin: 2px 0 4px; border: 0; border-top: 1px solid #b6b9be; }
`;
const PathButton = styled(IconButton)`
  width: 24px;
  height: 30px;
`;
const ListBox = styled.div`
  display: grid;
  grid-template: 250px 17px / 40px 16px;
  margin-top: 1px;
  border: solid #9a9da3;
  border-width: 0 0 1px 1px;
  background: #f0f0f0;
`;
const ListClip = styled.div`
  overflow: hidden;
  background: #fff;
  table { border-collapse: collapse; width: 39px; font: 12px/16px ${ui}; }
  th { height: 23px; padding: 0 0 0 6px; text-align: left; font-weight: 400; border-bottom: 1px solid #d0d2d5; background: linear-gradient(#fff 40%, #f1f2f4); }
  td { height: 17px; padding: 0 0 0 22px; border-bottom: 1px solid #ececec; }
`;
const Track = styled.div`
  display: flex;
  flex-direction: ${(p) => (p.$row ? "row" : "column")};
  align-items: center;
  gap: ${(p) => (p.$row ? 17 : 5)}px;
  padding: ${(p) => (p.$row ? "0 6px" : "7px 0 6px")};
  background: #f0f0f0;
`;
const Thumb = styled.div`
  width: 15px;
  height: 15px;
  border: 1px solid #8d9095;
  border-radius: 2px;
  background: linear-gradient(90deg, #f6f6f6, #cfd1d4);
`;
const Props = styled.div`
  flex: 1;
  margin-top: 2px;
  width: 58px;
  border: 1px solid #8d9095;
  overflow: hidden;
  background: #fff;
  h3 { display: flex; gap: 5px; align-items: center; margin: 0; padding-left: 2px; height: 19px; background: #c8c8c8; color: #6a6a6a; font: 700 12px/18px ${ui}; }
  div { height: 19px; border-left: 14px solid #c8c8c8; border-bottom: 1px solid #c8c8c8; padding-left: 3px; font: 12px/18px ${ui}; white-space: nowrap; }
`;

/* ---------- viewports ---------- */

const Work = styled.section`
  flex: 1;
  min-width: 0;
  display: flex;
  flex-direction: column;
  padding: 3px 7px 0 0;
`;
const Views = styled.div`
  position: relative;
  flex: 1;
  display: grid;
  grid-template: 319fr 316fr / 1fr 1fr;
  gap: 2px;
`;
const View = styled.section`
  position: relative;
  border: 1px solid #a2abb8;
  background: #9da3ab;
  overflow: hidden;
  > svg { position: absolute; inset: 0; }
`;
const ViewLabel = styled.div`
  position: relative;
  display: inline-flex;
  align-items: center;
  height: 18px;
  padding: 0 0 0 8px;
  border-radius: 0 0 3px 0;
  background: ${(p) => (p.$on ? "#86a2c0" : "#c8cdd4")};
  color: ${(p) => (p.$on ? "#111" : "#555960")};
  font: 11px/18px ${ui};
  button { ${bare} margin-left: 8px; width: 11px; height: 15px; border-left: 1px solid currentColor; display: grid; place-items: center; }
`;
const Hint = styled.div`
  position: absolute;
  left: 203px;
  top: calc(50% + 132px);
  height: 26px;
  padding: 0 4px;
  border: 1px solid #85878a;
  background: #d2d3a2cc;
  color: #4b4c52;
  font: 11px/24px ${ui};
  white-space: nowrap;
`;
const ViewTabs = styled.div`
  display: flex;
  height: 20px;
`;
const ViewTab = styled.button`
  ${bare}
  position: relative;
  z-index: ${(p) => (p.$on ? 1 : 0)};
  isolation: isolate;
  height: 20px;
  padding: 0 8px 0 10px;
  font: 11px/18px ${ui};
  &::before, &::after {
    content: "";
    position: absolute;
    z-index: -1;
    top: 0;
    bottom: 0;
    background: ${(p) => (p.$on ? "#fff" : p.$plain ? face : tabFill)};
    border: 1px solid ${edge};
    border-top: 0;
  }
  &::before { left: ${(p) => (p.$on ? -3 : 5)}px; width: 20px; border-right: 0; transform: skewX(30deg); }
  &::after { left: 14px; right: 0; border-left: 0; border-radius: 0 0 3px 0; }
`;

/* ---------- properties panel ---------- */

const Side = styled.aside`
  width: 171px;
  flex: none;
  display: flex;
  flex-direction: column;
  padding-top: 6px;
  font: 11px/16px ${sys};
`;
const SideTabs = styled.div`
  display: flex;
  height: 20px;
  margin-top: 3px;
`;
const SideTab = styled.button`
  ${bare}
  position: relative;
  z-index: ${(p) => p.$z};
  isolation: isolate;
  width: 37px;
  padding-left: 4px;
  display: flex;
  align-items: center;
  &::before, &::after {
    content: "";
    position: absolute;
    z-index: -1;
    top: 0;
    bottom: 0;
    background: ${(p) => (p.$on ? "#fff" : tabFill)};
    border: 1px solid ${edge};
    border-bottom: 0;
  }
  &::before { left: 0; width: 30px; border-right: 0; border-radius: 3px 0 0 0; }
  &::after { left: 24px; width: 17px; border-left: 0; transform: skewX(35deg); }
`;
const SideBody = styled.div`
  flex: 1;
  padding: 7px 6px 0 3px;
  border: 1px solid ${edge};
  background: #f6f7fa;
`;
const Sheet = styled.table`
  width: 100%;
  border-collapse: collapse;
  table-layout: fixed;
  border: 1px solid ${face};
  .indent { width: 8px; }
  .name { width: 72px; }
  th, td { padding: 0; text-align: left; font-weight: 400; height: 19px; border-bottom: 1px solid ${face}; white-space: nowrap; }
  th[colspan] { height: 23px; padding-left: 3px; }
  td { background: #fff; border-left: 1px solid ${face}; }
  td:first-child { background: #f6f7fa; border-left: 0; }
  td:nth-child(2) { padding-left: 4px; border-left: 0; }
`;
const Muted = styled.span`
  color: #85888e;
`;
const Field = styled.input`
  ${bare}
  display: block;
  width: 100%;
  height: 18px;
  padding-left: 4px;
  outline: 0;
  &:disabled { background: ${face}; color: #85888e; }
`;
const Push = styled.button`
  width: ${(p) => (p.$small ? "17px" : "calc(100% - 1px)")};
  height: 18px;
  margin-left: ${(p) => (p.$small ? 0 : 1)}px;
  padding: 0;
  border: 1px solid #707070;
  border-radius: 3px;
  background: linear-gradient(#f4f4f4, #ebebeb 48%, #d6d6d6 50%, #cfcfcf);
  line-height: 14px;
  display: block;
`;
const Combo = styled.div`
  display: flex;
  justify-content: space-between;
  align-items: center;
  height: 18px;
  position: relative;
  padding-left: ${(p) => p.$in || 0}px;
  select { appearance: none; ${bare} width: 100%; padding-left: 3px; outline: 0; }
  > span { position: absolute; right: 0; top: 0; width: 18px; height: 18px; border: 1px solid #707070; background: linear-gradient(#f4f4f4, #d2d2d2); display: grid; place-items: center; pointer-events: none; }
`;
const Check = styled.input`
  appearance: none;
  flex: none;
  width: 13px;
  height: 13px;
  margin: 0;
  display: grid;
  place-items: center;
  border: 1px solid #8e8f8f;
  background: linear-gradient(135deg, #cdd1d6, #f6f6f6);
  box-shadow: inset 0 0 0 1px #f4f4f4;
  &:checked::before {
    content: "";
    width: 9px;
    height: 9px;
    background: #3b4f93;
    clip-path: polygon(8% 45%, 26% 40%, 42% 66%, 78% 0, 98% 0, 50% 100%, 36% 100%);
  }
`;

/* ---------- bottom bars ---------- */

const Snaps = styled.div`
  display: flex;
  align-items: center;
  gap: 6px;
  height: 22px;
  margin-bottom: 1px;
  padding-left: 3px;
  font: 11px/16px ${sys};
  > i { width: 3px; height: 20px; border: solid #c0c5d2; border-width: 0 1px; margin-right: -1px; }
  label { display: flex; align-items: center; gap: 5px; }
`;
const SnapButton = styled.button`
  ${bare}
  display: flex;
  align-items: center;
  gap: 4px;
  &::before {
    content: "";
    width: 15px;
    height: 15px;
    border-radius: 2px;
    border: 1px solid ${(p) => (p.$on ? "#2c628b" : "#707070")};
    background: ${(p) => (p.$on ? "#8f9090" : "linear-gradient(#f6f6f6 50%, #d8d8d8 50%)")};
    box-shadow: inset 0 0 0 1px ${(p) => (p.$on ? "#7fb3d6" : "#fff")};
  }
`;
const Status = styled.footer`
  display: flex;
  height: 21px;
  border-top: 1px solid ${edge};
  border-bottom: 1px solid #22364c;
  font: 12px/19px ${sys};
`;
const Cell = styled.div`
  width: ${(p) => (p.$w ? p.$w + "px" : "auto")};
  flex: ${(p) => (p.$w ? "none" : 1)};
  display: flex;
  align-items: center;
  justify-content: ${(p) => (p.$left ? "flex-start" : "center")};
  padding-left: ${(p) => (p.$left ? 3 : 0)}px;
  gap: 2px;
  border-right: 1px solid ${edge};
  white-space: nowrap;
  ${(p) => p.$on && "background: #e2f1fb; font-weight: 700;"}
`;
const Swatch = styled.span`
  width: 14px;
  height: 14px;
  background: #000;
`;

/* ---------- small drawings ---------- */

const turn = { down: "M0 0h6L3 4z", up: "M0 4h6L3 0z", left: "M4 0v6L0 3z", right: "M0 0v6l4-3z" };
const Caret = ({ d = "down", f = "#333" }) => (
  <Art width={d === "down" || d === "up" ? 6 : 4} height={d === "down" || d === "up" ? 4 : 6} aria-hidden="true"><path d={turn[d]} fill={f} /></Art>
);
const Cross = () => <Art width="8" height="8" aria-hidden="true"><path d="M1 1l6 6M7 1L1 7" stroke="#a9aebb" strokeWidth="2" /></Art>;
const GearOutline = () => (
  <Art width="16" height="16" viewBox="0 0 28 28" aria-hidden="true"><Cog r={9} f="#eceef1" s="#80848b" hf={face} hole={3} sw={1.6} /></Art>
);

/* ---------- drawing data ---------- */

const ORIGIN = [30, 268];
const SPAN = 170;
const pieces = [
  "30,56 82,56 82,88 84,89 86,88 88,86 90,86 92,88 92,127 91,129 88,129 85,127 83,126 82,128 82,158 30,158",
  "99,56 184,56 184,158 99,158",
  "31,165 156,165 157,167 157,267 30,267 30,225 95,224 96,223 96,220 94,219 94,214 96,213 96,210 95,209 31,209 30,208 30,166",
  "167,166 294,166 294,268 167,268 167,225 232,225 233,223 233,221 231,220 231,215 233,213 233,210 231,209 167,209",
];
const selected = "133,85 134,84 136,83 138,85 145,85 147,83 149,84 150,86 150,130 148,131 146,129 145,128 139,128 138,130 135,131 133,130";

/* Maps the construction plane (u, v in -1..1) to the perspective view. */
const project = (() => {
  const [x0, y0] = [-57.4, 256.6], [x1, y1] = [268.7, 408.5], [x2, y2] = [395.3, 186.4], [x3, y3] = [138.3, 118.3];
  const dx1 = x1 - x2, dx2 = x3 - x2, sx = x0 - x1 + x2 - x3;
  const dy1 = y1 - y2, dy2 = y3 - y2, sy = y0 - y1 + y2 - y3;
  const den = dx1 * dy2 - dx2 * dy1;
  const g = (sx * dy2 - sy * dx2) / den, h = (dx1 * sy - dy1 * sx) / den;
  return (u, v) => {
    const s = (u + 1) / 2, t = (v + 1) / 2, w = g * s + h * t + 1;
    return [((x1 - x0 + g * x1) * s + (x3 - x0 + h * x3) * t + x0) / w, ((y1 - y0 + g * y1) * s + (y3 - y0 + h * y3) * t + y0) / w].map((n) => n.toFixed(1)).join(",");
  };
})();
const inPerspective = (pts) => pts.split(" ").map((p) => {
  const [x, y] = p.split(",").map(Number);
  return project((x - ORIGIN[0]) / SPAN, (ORIGIN[1] - y) / SPAN);
}).join(" ");
const steps = Array.from({ length: 41 }, (_, i) => i / 20 - 1);
const crisp = { shapeRendering: "crispEdges" };
const AxisText = ({ x, y, children }) => <text x={x} y={y} fontFamily="Liberation Mono, monospace" fontSize="13" fontWeight="700" fill="#63666b" textAnchor="middle">{children}</text>;
const Axes = ({ a, b, y }) => (
  <g>
    <path d={`M36.500 ${y - 30}V${y + 0.5}H66`} fill="none" stroke="#5f6267" {...crisp} />
    <AxisText x={42} y={y - 28}>{a}</AxisText>
    <AxisText x={72} y={y + 2}>{b}</AxisText>
  </g>
);
const TopView = () => (
  <Art width="100%" height="100%" role="img" aria-label="Superior">
    <g {...crisp}>
      <rect x="0" y="98" width="201" height="340" fill="#939aa2" />
      {steps.map((s) => <path key={s} d={`M${Math.round(30 + s * 170) + 0.5} 98v340M0 ${Math.round(268 + s * 170) + 0.5}h201`} stroke="#82878f" />)}
      <rect x="0" y="0" width="400" height="98" fill="#9da3ab" />
      <path d="M0 98.500h201" stroke="#82878f" />
      <path d="M30 98v170" stroke="#3f8f45" strokeWidth="2" />
      <path d="M30 268.500h171" stroke="#9c4a4a" strokeWidth="2" />
    </g>
    <g fill="none" stroke="#000" transform="translate(.5 .5)" {...crisp}>
      {pieces.map((p) => <polygon key={p} points={p} />)}
      <polygon points={selected} stroke="#ffff00" />
    </g>
    <path d="M256 59L174 90M175.500 63v27l22 17" fill="none" stroke="#ed1c24" strokeWidth="5" strokeLinecap="round" strokeLinejoin="round" />
    <Axes a="y" b="x" y={281} />
  </Art>
);
const PerspectiveView = () => (
  <Art width="100%" height="100%" role="img" aria-label="Perspectiva">
    <polygon points={[project(-1, -1), project(1, -1), project(1, 1), project(-1, 1)].join(" ")} fill="#939aa2" />
    <g stroke="#80858d" strokeWidth=".8">
      {steps.map((s) => <path key={s} d={`M${project(s, -1)}L${project(s, 1)}M${project(-1, s)}L${project(1, s)}`} />)}
    </g>
    <path d={`M${project(0, 0)}L${project(0, 1)}`} stroke="#3f8f45" strokeWidth="1.500" />
    <path d={`M${project(0, 0)}L${project(1, 0)}`} stroke="#9c3a3a" strokeWidth="2" />
    <g fill="none" stroke="#000" {...crisp}>
      {pieces.map((p) => <polygon key={p} points={inPerspective(p)} />)}
      <polygon points={inPerspective(selected)} stroke="#ffff00" />
    </g>
    <path d="M36.500 255v26l14-12M36.500 281l25 7" fill="none" stroke="#5f6267" />
    <AxisText x={42} y={256}>z</AxisText>
    <AxisText x={56} y={269}>y</AxisText>
    <AxisText x={68} y={290}>x</AxisText>
  </Art>
);
const SideView = ({ name, id, step, x, y, a, b }) => (
  <Art width="100%" height="100%" role="img" aria-label={name}>
    <defs>
      <pattern id={id} width={step} height={step} x={x} y={y} patternUnits="userSpaceOnUse"><path d={`M.5 0v${step}M0 .5h${step}`} stroke="#9299a1" {...crisp} /></pattern>
      <pattern id={id + "m"} width={step * 10} height={step * 10} x={x} y={y} patternUnits="userSpaceOnUse"><path d={`M.5 0v${step * 10}M0 .5h${step * 10}`} stroke="#82878f" {...crisp} /></pattern>
    </defs>
    <rect width="100%" height="100%" fill={`url(#${id})`} />
    <rect width="100%" height="100%" fill={`url(#${id}m)`} />
    <g {...crisp}>
      <path d={`M${x} 0v${y}`} stroke="#459448" strokeWidth="2" />
      <path d={`M${x} ${y - 0.5}h4000`} stroke="#8c3a40" />
      <path d={`M${x} ${y + 0.5}h4000`} stroke="#000" />
    </g>
    <Axes a={a} b={b} y={278} />
  </Art>
);

const Viewport = ({ name, on, children }) => (
  <View>
    {children}
    <ViewLabel $on={on}>{name}<button aria-label={`Menú de ${name}`}><Caret f="currentColor" /></button></ViewLabel>
  </View>
);

/* ---------- content ---------- */

const menus = ["Archivo", "Edición", "Vista", "Curva", "Superficie", "Sólido", "Malla", "Acotación", "Transformar", "Herramientas", "Análisis", "Renderizado", "Paneles", "RhinoCAM 2016", "Ayuda"];
const toolTabs = ["Estándar", "PlanosC", "Definir vista", "Visualización", "Seleccionar", "Disposición de las vistas", "Visibilidad", "Transformar", "Curvas", "Superficies", "Sólidos", "Mallas", "Renderizado", "Dibujo", "Novedades V5"];
const groups = [
  { name: "Machine Setup", w: 90, items: [["machine", "Machine"], ["post", "Post"], ["setup", "Setup", 1]] },
  { name: "Stock", w: 87, items: [["stock", "Stock", 1], ["align", "Align", 1], ["material", "Material"]] },
  { name: "Machining Operations", w: 224, cols: "100px 74px 1fr", items: [["zero", "Work Zero"], ["axis2", "2 Axis", 1], ["axis3", "3 Axis Adv", 1], ["axis4", "4 Axis", 1], ["axis5", "5 Axis", 1], ["holes", "Holes", 1], ["wrench", "", 1], ["folders", "", 1]] },
];
const sections = [
  ["Vista", [["Título", "Superior"], ["Anchura", "372"], ["Altura", "317"], ["Proyección", "Paralela", "select"]]],
  ["Cámara", [["Distancia fo...", "50.0", "off"], ["Rotación", "90.0"], ["Posición X", "183.468"], ["Posición Y", "129.087"], ["Posición Z", "96.027"], ["Posición", "Colocar...", "button"]]],
  ["Objetivo", [["Objetivo X", "183.468"], ["Objetivo Y", "129.087"], ["Objetivo Z", "-9.074"], ["Posición", "Colocar...", "button"]]],
  ["Papeltapiz", [["Nombre de ...", "(ninguno)", "browse"], ["Mostrar", "", "check"], ["Gris", "", "check"]]],
];
const snaps = [["Fin", 1], ["Cerca", 1], ["Punto", 1], ["Med", 1], ["Cen", 1], ["Int", 1], ["Perp", 0], ["Tan", 1], ["Cuad", 1], ["Nodo", 1], ["Vértice", 0]];
const status = [["PlanoC", 57], ["x 60.06", 88], ["y 19.20", 88], ["z 0.00", 88], ["Milímetros", 88]];
const modes = [["Forzado a la rejilla", 134, 1], ["Orto", 39], ["Planar", 54, 1], ["RefObj", 56, 1], ["SmartTrack", 85, 1], ["Gumball", 66], ["Grabar historial", 113], ["Filtrar", 50]];

function Value({ label, value, kind }) {
  if (kind === "select") return <Combo><select aria-label={label}><option>{value}</option></select><span><Caret f="#000" /></span></Combo>;
  if (kind === "button") return <Push aria-label={`${label}: ${value}`}>{value}</Push>;
  if (kind === "browse") return <Combo $in={2}>{value}<Push $small aria-label="Examinar">...</Push></Combo>;
  if (kind === "check") return <Combo $in={4}><Check type="checkbox" defaultChecked aria-label={label} /></Combo>;
  return <Field aria-label={label} defaultValue={value} disabled={kind === "off"} />;
}

const Leaf = ({ icon, gap, bold, children }) => (
  <Node $gap={gap} $bold={bold}><Icon art={camIcons[icon]} size={20} />{children}</Node>
);
const Expander = ({ plus, hang, name }) => (
  <Toggle $hang={hang} aria-label={name}><Art width="5" height="5" aria-hidden="true"><path d={plus ? "M0 2.500h5M2.500 0v5" : "M0 2.500h5"} stroke="#26418c" /></Art></Toggle>
);

export default function App() {
  return (
    <Window>
      <Global />
      <Defs />
      <TitleBar>
        <Art width="16" height="16" viewBox="0 0 16 16" aria-hidden="true"><path d="M0 0h16v16H0z" fill="#151515" /><path d="M1 4l3-1 3 2 4-2 4 3-1 3-5 1-2 4-3-2 1-3-3-2z" fill="#e8e8e8" /><path d="M4 6l3 1M10 6l2 1" stroke="#222" /></Art>
        <h1>Sin título - Rhinoceros 5.0 Educational Lab License</h1>
        <WinButtons>
          <WinButton $first aria-label="Minimizar"><Art width="13" height="6"><path d="M1 1h11v4H1z" fill="#fff" stroke="#445" /></Art></WinButton>
          <WinButton aria-label="Restaurar"><Art width="13" height="13"><path d="M4 1h8v8H4z" fill="#fff" stroke="#445" /><path d="M1 4h8v8H1z" fill="#fff" stroke="#445" /><path d="M4 7h2v2H4z" fill="#8fa2b8" stroke="#445" /></Art></WinButton>
          <WinButton $close aria-label="Cerrar"><Art width="13" height="11"><path d="M2 1.500l9 8M11 1.500l-9 8" stroke="#445" strokeWidth="4" /><path d="M2.500 2l8 7M10.500 2l-8 7" stroke="#fff" strokeWidth="2.400" /></Art></WinButton>
        </WinButtons>
      </TitleBar>
      <MenuBar>{menus.map((m) => <MenuItem key={m}>{m}</MenuItem>)}</MenuBar>

      <Command>
        <SideGrip />
        <CommandBody>
          <History><p>Seleccione un objeto:</p><Spin><Caret d="up" /><Caret /></Spin></History>
          <Prompt>
            <label htmlFor="command"><b>Seleccione un objeto. Pulse Intro cuando termine</b>:</label>
            <input id="command" type="text" />
            <Steps><button aria-label="Anterior"><Caret d="up" f="#3b55b5" /></button><button aria-label="Siguiente"><Caret f="#3b55b5" /></button></Steps>
          </Prompt>
        </CommandBody>
      </Command>

      <Row>
        <SideGrip />
        <Spacer>
          <Tabs role="tablist">
            {toolTabs.map((t, i) => <Tab key={t} role="tab" $on={i === 0}>{t}</Tab>)}
            <Spacer />
            <IconButton $size={16} aria-label="Opciones de la barra"><GearOutline /></IconButton>
          </Tabs>
          <Toolbar>
            {std.map(([n, art, fly]) => <IconButton key={n} aria-label={n}><Icon art={art} fly={fly} /></IconButton>)}
          </Toolbar>
        </Spacer>
      </Row>

      <Main>
        <ToolColumn>
          <GripTop $in={3}><Grip /></GripTop>
          <ToolGrid>
            {tools.map(([n, art, fly]) => <IconButton key={n} aria-label={n}><Icon art={art} fly={fly} /></IconButton>)}
          </ToolGrid>
        </ToolColumn>

        <Cam>
          <PanelTitle><h2>RhinoCAM 2016 - Machining Browser</h2><Grip /><button aria-label="Cerrar Machining Browser"><Cross /></button></PanelTitle>
          <RibbonTabs>
            <MillButton>MILL</MillButton>
            <IconButton $size={20} aria-label="Herramienta"><Icon size={20} art={<g><g transform="translate(2 3) scale(1.400)"><Mill /></g><path d="M18 5h7v9l-4 10-5 2 1-8z" fill="#b9bcc0" stroke="#333" /><path d="M17 20l3 1-3 5z" fill="#e89b18" /></g>} /></IconButton>
            <RibbonTab $on>Program</RibbonTab>
            <RibbonTab>Simulate</RibbonTab>
            <Spacer />
            <IconButton $size={20} aria-label="Contraer"><Art width="11" height="8"><path d="M1 6l4.500-4.500L10 6l-1.500 1L5.500 4.500 2.500 7z" fill="#fff" stroke="#555" strokeWidth=".8" /></Art></IconButton>
            <IconButton $size={26} aria-label="Preferencias"><Icon size={18} art={<g><path d="M4 24L16 12" stroke="#c8691a" strokeWidth="5" strokeLinecap="round" /><path d="M11 5l8-3 6 7 2 5-4-2-5 3-3-5z" fill="url(#gg)" stroke="#444" /></g>} /></IconButton>
            <IconButton $size={14} aria-label="Más preferencias"><Caret /></IconButton>
            <IconButton $size={24} aria-label="Configuración"><Icon size={17} art={<Cog r={9} f="#d8dade" s="#55585e" hf="#f2f3f5" hole={4} sw={1.6} />} /></IconButton>
            <IconButton $size={24} aria-label="Ayuda de RhinoCAM"><Icon size={17} art={<g><circle cx="14" cy="14" r="12.500" fill="#3d86dc" stroke="#1c4c94" strokeWidth="2" /><path d="M10 11c0-6 9-6 9-1 0 3-4.500 3.500-4.500 7" fill="none" stroke="#fff" strokeWidth="2.600" /><circle cx="14.500" cy="20.500" r="1.800" fill="#fff" /></g>} /></IconButton>
          </RibbonTabs>
          <Ribbon>
            {groups.map((g) => (
              <Group key={g.name} $w={g.w}>
                <Commands $cols={g.cols}>
                  {g.items.map(([icon, text, drop]) => (
                    <Cmd key={icon} aria-label={text || icon}><Icon art={camIcons[icon]} size={21} />{text && <span>{text}</span>}{drop && <Caret f="#444" />}</Cmd>
                  ))}
                </Commands>
                <h3>{g.name}</h3>
              </Group>
            ))}
          </Ribbon>
          <TreeBox>
            <Root>
              <li>
                <Node $bold><Expander name="Contraer Machining Job" /><Icon art={camIcons.job} size={22} /><span>Machining Job</span></Node>
                <Branch $in={42}>
                  <li><Leaf icon="machine" gap={11}>Machine - 3 Axis</Leaf></li>
                  <li><Leaf icon="post" gap={11}>Post - Haas</Leaf></li>
                  <li><Leaf icon="stock" gap={11}>Stock - Box Stock</Leaf></li>
                  <li>
                    <Expander hang name="Contraer Setup 1" />
                    <Leaf icon="setup1" bold>Setup 1</Leaf>
                    <Branch $in={23}>
                      <li><Leaf icon="zero">Work Zero</Leaf></li>
                      <li><Expander plus hang name="Expandir perfilado" /><Leaf icon="folder">2 1/2 Axis Profiling</Leaf></li>
                    </Branch>
                  </li>
                </Branch>
              </li>
            </Root>
          </TreeBox>
          <ViewBar>
            {viewIcons.map(([n, art], i) => <ViewButton key={n} $on={i === 2} aria-label={n}><Icon art={art} size={18} /></ViewButton>)}
          </ViewBar>
          <Foot />
        </Cam>

        <Paths>
          <PanelTitle><h2>Toolp...</h2><button aria-label="Cerrar Toolpath Editor"><Cross /></button></PanelTitle>
          <PathTools>
            <h3>Global Edits</h3>
            {pathTools.map(([n, art]) => <PathButton key={n} aria-label={n}><Icon art={art} size={22} /></PathButton>)}
            <hr />
            <PathButton aria-label="Deshacer edición"><Icon size={22} art={<path d="M5 5v11h11l-4-4c3-3 8-1 8 3 0 3-2 5-5 7 6-1 9-5 9-9 0-7-9-11-15-5z" fill="#1d5fc4" />} /></PathButton>
            <PathButton aria-label="Guardar trayectoria"><Icon size={22} art={<g><Mesh /><path d="M12 1h15v16H12z" fill="#2a2a94" /><path d="M15 1h9v8h-9z" fill="#e8e8f4" /><path d="M16 11h7v6h-7z" fill="#cfcfe6" /></g>} /></PathButton>
          </PathTools>
          <ListBox>
            <ListClip>
              <table>
                <thead><tr><th scope="col">#</th></tr></thead>
                <tbody>{Array.from({ length: 14 }, (_, i) => <tr key={i}><td>{i + 1}</td></tr>)}</tbody>
              </table>
            </ListClip>
            <Track><Caret d="up" /><Thumb /><Spacer /><Caret /></Track>
            <Track $row><Caret d="left" /><Caret d="right" /></Track>
          </ListBox>
          <Props>
            <h3><Art width="10" height="10" aria-hidden="true"><path d="M.5.5h8.500v8.500H.5zM2 5h6" fill="none" stroke="#000" /></Art>Machining</h3>
            <div>Name</div>
            <div># of GOTO</div>
            <div>Estimated</div>
          </Props>
        </Paths>

        <Work>
          <Views>
            <Viewport name="Superior" on><TopView /></Viewport>
            <Viewport name="Perspectiva"><PerspectiveView /></Viewport>
            <Viewport name="Frontal"><SideView name="Frontal" id="gf" step={13} x={177} y={121} a="z" b="x" /></Viewport>
            <Viewport name="Derecha"><SideView name="Derecha" id="gd" step={16} x={60} y={171} a="z" b="y" /></Viewport>
            <Hint role="tooltip">Select objects - hit right mouse to end</Hint>
          </Views>
          <ViewTabs role="tablist">
            <ViewTab role="tab">Perspectiva</ViewTab>
            <ViewTab role="tab" $on>Superior</ViewTab>
            <ViewTab role="tab">Frontal</ViewTab>
            <ViewTab role="tab">Derecha</ViewTab>
            <ViewTab $plain aria-label="Nueva vista"><Art width="13" height="11"><path d="M5 1h3v3h3v3H8v3H5V7H2V4h3z" fill="#fff" stroke="#555" /></Art></ViewTab>
          </ViewTabs>
        </Work>

        <Side>
          <GripTop $in={1}><Grip /></GripTop>
          <SideTabs role="tablist">
            <SideTab role="tab" $on $z={4} aria-label="Propiedades"><Icon size={17} art={<Wheel r={9} w={5} />} /></SideTab>
            <SideTab role="tab" $z={3} aria-label="Capas"><Icon size={20} art={<Layers />} /></SideTab>
            <SideTab role="tab" $z={2} aria-label="Pantalla"><Icon size={20} art={<g><path d="M5 5h18v13H5z" fill="#777" stroke="#111" strokeWidth="2" /><path d="M10 22h8" stroke="#111" strokeWidth="3" /></g>} /></SideTab>
            <SideTab role="tab" $z={1} aria-label="Ayuda"><Icon size={20} art={<g><path d="M4 3h21v21H4z" fill="#fff" stroke="#2a4fc0" /><path d="M4 3h21v4H4z" fill="#5a82e8" /><g transform="translate(1 1.500) scale(.95)"><Help r={7.5} /></g></g>} /></SideTab>
            <Spacer />
            <IconButton $size={18} aria-label="Opciones del panel"><GearOutline /></IconButton>
          </SideTabs>
          <SideBody>
            <Sheet>
              <colgroup><col className="indent" /><col className="name" /><col /></colgroup>
              <tbody>
                {sections.map(([title, rows]) => (
                  <React.Fragment key={title}>
                    <tr><th colSpan="3" scope="colgroup">{title}</th></tr>
                    {rows.map(([label, value, kind]) => (
                      <tr key={label}><td /><td>{kind === "off" ? <Muted>{label}</Muted> : label}</td><td><Value label={label} value={value} kind={kind} /></td></tr>
                    ))}
                  </React.Fragment>
                ))}
              </tbody>
            </Sheet>
          </SideBody>
        </Side>
      </Main>

      <Snaps>
        <i />
        {snaps.map(([n, on]) => <label key={n}><Check type="checkbox" defaultChecked={!!on} />{n}</label>)}
        <SnapButton $on>Proyectar</SnapButton>
        <SnapButton>Desactivar</SnapButton>
      </Snaps>
      <Status>
        {status.map(([t, w]) => <Cell key={t} $w={w}>{t}</Cell>)}
        <Cell $w={173} $left><Swatch />Predeterminada</Cell>
        {modes.map(([t, w, on]) => <Cell key={t} $w={w} $on={on}>{t}</Cell>)}
        <Cell $left>Memoria física disponible: 5748 MB</Cell>
        <Cell $w={8} />
      </Status>
    </Window>
  );
}
